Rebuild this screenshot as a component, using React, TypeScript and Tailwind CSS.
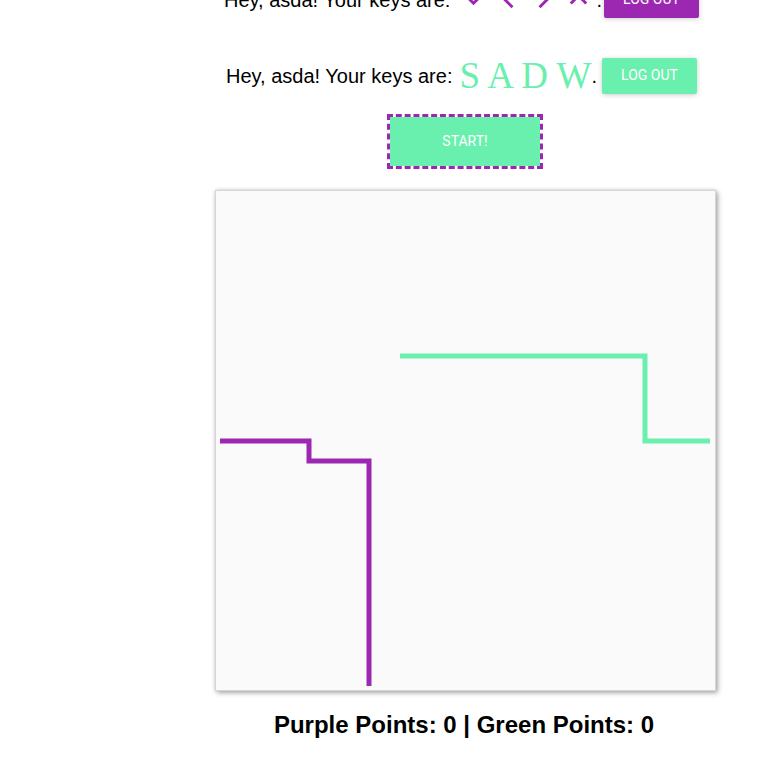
import type { ReactNode } from "react"
import {
  MdKeyboardArrowDown,
  MdKeyboardArrowLeft,
  MdKeyboardArrowRight,
  MdKeyboardArrowUp,
} from "react-icons/md"

const PURPLE = "#9c27b0"
const GREEN = "#69f0ae"

function KeysRow({ keys, btn, gap }: { keys: ReactNode; btn: string; gap: string }) {
  return (
    <div className="flex h-[41px] items-center justify-center pr-[7px] text-black">
      <span className="text-[20px] font-['Liberation_Sans',Arial,sans-serif]">Hey, asda! Your keys are:</span>
      {keys}
      <span className="text-[20px] font-['Liberation_Sans',Arial,sans-serif]">.</span>
      <button
        className={`${gap} flex h-[36px] w-[95px] items-center justify-center rounded-[2px] text-[14px] uppercase text-white shadow-[0_1px_5px_rgba(0,0,0,0.2)] font-['Roboto',sans-serif]`}
        style={{ backgroundColor: btn }}
      >
        Log out
      </button>
    </div>
  )
}

export default function App() {
  return (
    <div className="h-[763px] w-[764px] overflow-hidden bg-white">
      <div className="-mt-[21px] flex w-[930px] flex-col items-center">
        <KeysRow
          btn={PURPLE}
          gap="ml-[2px]"
          keys={
            <span className="ml-[6px] flex items-center text-[#9c27b0]">
              <MdKeyboardArrowDown size={35} />
              <MdKeyboardArrowLeft size={35} />
              <MdKeyboardArrowRight size={35} />
              <MdKeyboardArrowUp size={35} />
            </span>
          }
        />
        <div className="mt-[35px]">
          <KeysRow
            btn={GREEN}
            gap="ml-[5px]"
            keys={
              <span className="ml-[7px] text-[37px] leading-[41px] text-[#69f0ae] font-['Liberation_Serif','Times_New_Roman',serif]">
                S A D W
              </span>
            }
          />
        </div>

        <div className="mt-[18px] border-[3px] border-dashed border-[#9c27b0]">
          <button className="flex h-[49px] w-[150px] items-center justify-center bg-[#69f0ae] text-[14px] text-white font-['Roboto',sans-serif]">
            START!
          </button>
        </div>

        <div className="mt-[21px] h-[501px] w-[501px] border border-[#d6d6d6] bg-[#fafafa] shadow-[0_0_4px_rgba(0,0,0,0.15),2px_2px_5px_rgba(0,0,0,0.3)]">
          <svg width="499" height="499" viewBox="0 0 499 499">
            <polyline
              points="184,165 429,165 429,250 494,250"
              fill="none"
              stroke={GREEN}
              strokeWidth="5"
            />
            <polyline
              points="4,250 93,250 93,270 153,270 153,495"
              fill="none"
              stroke={PURPLE}
              strokeWidth="5"
            />
          </svg>
        </div>

        <div className="mt-[16px] pr-[2px] text-[24px] font-bold text-black font-['Liberation_Sans',Arial,sans-serif]">
          Purple Points: 0 | Green Points: 0
        </div>
      </div>
    </div>
  )
}
